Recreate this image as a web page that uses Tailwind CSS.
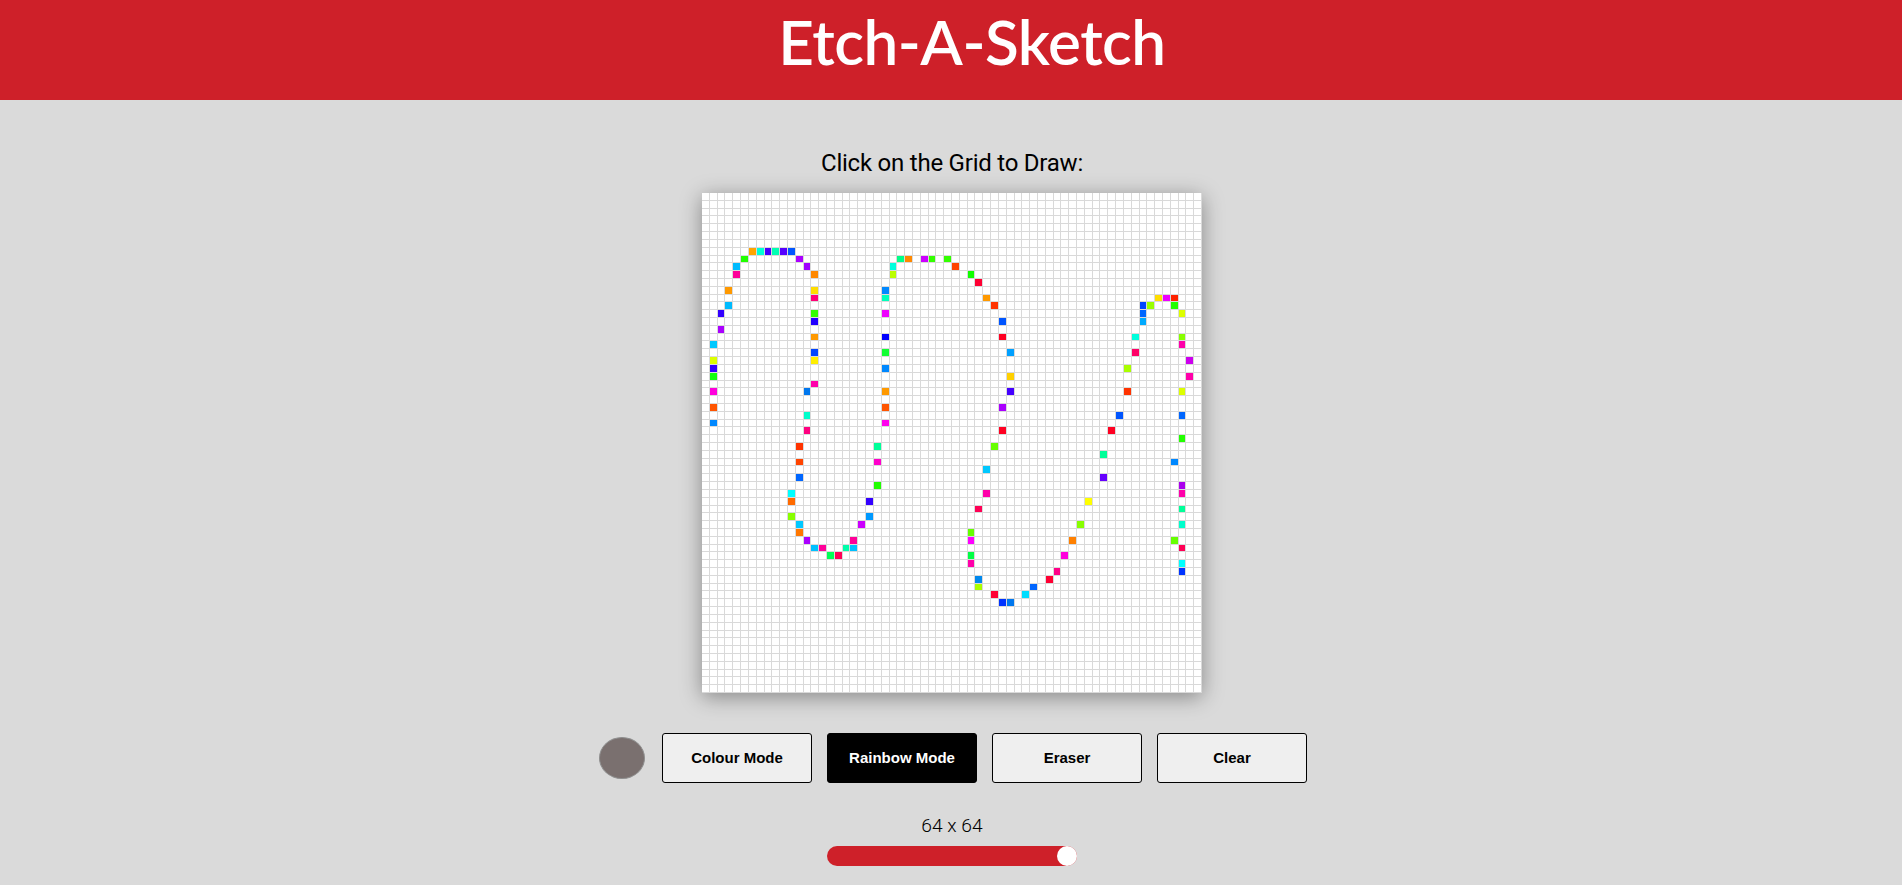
<!DOCTYPE html>
<html lang="en">
<head>
  <meta charset="UTF-8" />
  <meta name="viewport" content="width=device-width, initial-scale=1.0"/>
  <title>Etch-A-Sketch</title>
  <script src="https://cdn.jsdelivr.net/npm/@tailwindcss/browser@4"></script>
</head>
<body class="bg-[#dadada] text-black font-['Roboto',sans-serif] overflow-hidden">

  <header class="h-[100px] bg-[#ce2029] flex justify-center">
    <h1 class="ml-[42px] text-[62px] leading-[82px] font-semibold tracking-[-0.5px] text-white font-['Lato',sans-serif]">Etch-A-Sketch</h1>
  </header>

  <main class="flex flex-col items-center pl-[2px]">
    <h2 class="mt-[49px] text-2xl leading-7 tracking-[-0.23px]">Click on the Grid to Draw:</h2>

    <!-- cells get built below -->
    <div id="grid" class="mt-[16px] w-[500px] h-[500px] bg-white grid grid-cols-[repeat(64,1fr)] grid-rows-[repeat(64,1fr)] shadow-[0_4px_20px_rgba(0,0,0,0.38)]"></div>

    <div class="mt-[40px] ml-[2px] flex items-center gap-[15px] font-['Liberation_Sans',sans-serif] text-[15px] font-bold">
      <div class="w-[46px] h-[42px] mr-[2px] rounded-[50%] bg-[#7a706f] border border-[#8f8f8f]"></div>
      <button class="w-[150px] h-[50px] bg-[#efefef] border border-black rounded-[3px]">Colour Mode</button>
      <button class="w-[150px] h-[50px] bg-black text-white border border-black rounded-[3px]">Rainbow Mode</button>
      <button class="w-[150px] h-[50px] bg-[#efefef] border border-black rounded-[3px]">Eraser</button>
      <button class="w-[150px] h-[50px] bg-[#efefef] border border-black rounded-[3px]">Clear</button>
    </div>

    <p class="mt-[30px] text-[19.2px] leading-[26px] font-light">64 x 64</p>
    <input type="range" min="1" max="64" value="64"
           class="mt-[7px] w-[250px] h-5 appearance-none rounded-full bg-[#ce2029] [&::-webkit-slider-thumb]:appearance-none [&::-webkit-slider-thumb]:w-5 [&::-webkit-slider-thumb]:h-5 [&::-webkit-slider-thumb]:rounded-full [&::-webkit-slider-thumb]:bg-white" />
  </main>

  <script>
    // row: [col, colour, col, colour ...]
    const painted = {
      7: [6,'#ffa500',7,'#00ffd5',8,'#4400ff',9,'#00ffb3',10,'#5500ff',11,'#0055ff'],
      8: [5,'#22ff00',12,'#aa00ff',25,'#00ff88',26,'#ff8800',28,'#cc00ff',29,'#33ff00',31,'#33ff00'],
      9: [4,'#00bbff',13,'#a000ff',24,'#00ffdd',32,'#ff4400'],
      10: [4,'#ff0099',14,'#ff8800',24,'#bbff00',34,'#11ff00'],
      11: [35,'#ff0033'],
      12: [3,'#ff9900',14,'#ffdd00',23,'#0088ff'],
      13: [14,'#ff0077',23,'#00ffbb',36,'#ff9900',58,'#ffdd00',59,'#ee00ff',60,'#ff2200'],
      14: [3,'#00bbff',37,'#ff3300',56,'#0044ff',57,'#99ff00',60,'#22ff00'],
      15: [2,'#3300ff',14,'#33ff00',23,'#ee00ff',56,'#0066ff',61,'#ddff00'],
      16: [14,'#2200ff',38,'#0055ff',56,'#00aaff'],
      17: [2,'#aa00ff'],
      18: [14,'#ff9900',23,'#0000ff',38,'#ff0022',55,'#00ffdd',61,'#88ff00'],
      19: [1,'#00c8ff',61,'#ff00aa'],
      20: [14,'#0044ff',23,'#11ff33',39,'#00a0ff',55,'#ff0066'],
      21: [1,'#ddff00',14,'#ffee00',62,'#cc00ee'],
      22: [1,'#3300ff',23,'#0088ff',54,'#aaff00'],
      23: [1,'#11ff11',39,'#ffd000',62,'#ff00aa'],
      24: [14,'#ff00aa'],
      25: [1,'#ff00dd',13,'#0077ee',23,'#ff9900',39,'#4400ff',54,'#ff3300',61,'#ddff00'],
      27: [1,'#ff5500',23,'#ff5500',38,'#aa00ff'],
      28: [13,'#00ffcc',53,'#0055ff',61,'#0066ff'],
      29: [1,'#0088ff',23,'#ff00ee'],
      30: [13,'#ff0080',38,'#ff0022',52,'#ff0022'],
      31: [61,'#22ff00'],
      32: [12,'#ff3300',22,'#00ff99',37,'#66ff00'],
      33: [51,'#00ff99'],
      34: [12,'#ff4400',22,'#ff00cc',60,'#0088ff'],
      35: [36,'#00c8ff'],
      36: [12,'#0066ff',51,'#6600ff'],
      37: [22,'#22ff00',61,'#aa00ee'],
      38: [11,'#00ffff',36,'#ff00aa',61,'#ff00aa'],
      39: [11,'#ff6a00',21,'#3300ff',49,'#ffff00'],
      40: [35,'#ff0055',61,'#00ff99'],
      41: [11,'#88ff00',21,'#0099ff'],
      42: [12,'#00c8ff',20,'#cc00ff',48,'#88ff00',61,'#00ffcc'],
      43: [12,'#ff7700',34,'#66ff00'],
      44: [13,'#aa00ff',19,'#ff0099',34,'#ff00ff',47,'#ff8000',60,'#66ff00'],
      45: [14,'#00c0ff',15,'#ff0099',18,'#00ffaa',19,'#00c0ff',61,'#ff0055'],
      46: [16,'#00ff55',17,'#ff0055',34,'#00ff44',46,'#ff00dd'],
      47: [34,'#ff00aa',61,'#00ffff'],
      48: [45,'#ff0088',61,'#0033ff'],
      49: [35,'#0088ee',44,'#ff0033'],
      50: [35,'#aaff00',42,'#0066ff'],
      51: [37,'#ff0033',41,'#00ddff'],
      52: [38,'#0033ff',39,'#0077ee']
    };

    const grid = document.getElementById('grid');
    for (let row = 0; row < 64; row++) {
      const line = painted[row] || [];
      for (let col = 0; col < 64; col++) {
        const cell = document.createElement('div');
        cell.className = 'border-r border-b border-[#d9d9d9]';
        const i = line.indexOf(col);
        if (i !== -1) cell.style.backgroundColor = line[i + 1];
        grid.appendChild(cell);
      }
    }
  </script>
</body>
</html>
